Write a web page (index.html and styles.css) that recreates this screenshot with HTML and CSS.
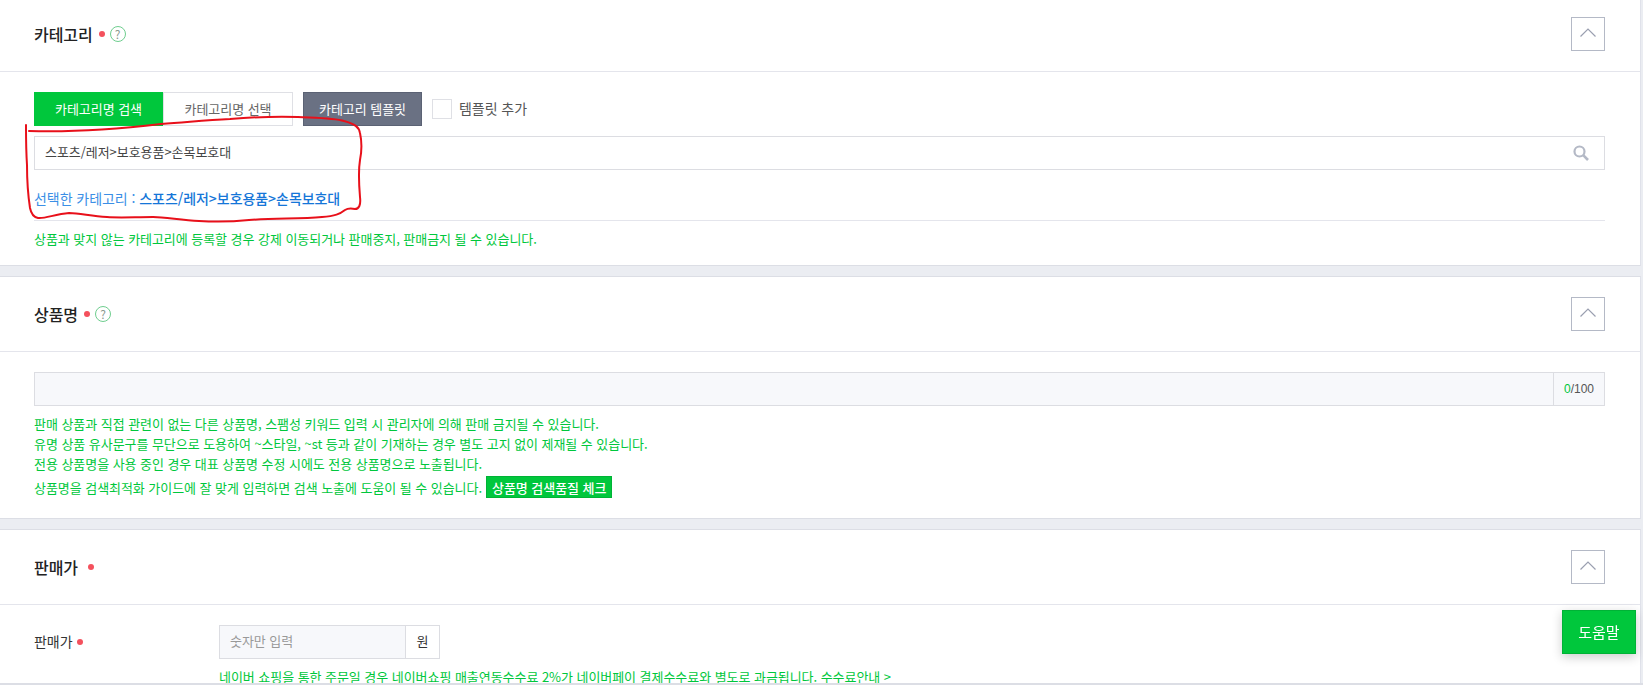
FILE: index.html
```html
<!DOCTYPE html>
<html lang="ko">
  <head>
    <meta charset="UTF-8" />
    <title>상품 등록</title>
    <link rel="stylesheet" href="styles.css">
  </head>
  <body>
    <div class="page">
      <section class="panel panel-category">
        <div class="panel-head">
          <h3>카테고리</h3>
          <span class="dot"></span>
          <span class="help-icon">?</span>
          <button class="toggle">
            <svg width="16" height="9" viewBox="0 0 16 9"><path d="M0.5 8.5L8 1l7.5 7.5" fill="none" stroke="#9a9fb0" stroke-width="1.2"/></svg>
          </button>
        </div>
        <div class="panel-body">
          <div class="tab-row">
            <button class="tab tab-on">카테고리명 검색</button>
            <button class="tab tab-off">카테고리명 선택</button>
            <button class="btn-template">카테고리 템플릿</button>
            <span class="check-box"></span>
            <span class="check-label">템플릿 추가</span>
          </div>
          <div class="search-box">
            <span class="search-text">스포츠/레저&gt;보호용품&gt;손목보호대</span>
            <svg width="16" height="16" viewBox="0 0 16 16"><circle cx="6.5" cy="6.5" r="5" fill="none" stroke="#b4b9c6" stroke-width="2.2"/><path d="M10.2 10.2L15 15" stroke="#b4b9c6" stroke-width="2.6"/></svg>
          </div>
          <p class="selected">선택한 카테고리 : <b>스포츠/레저&gt;보호용품&gt;손목보호대</b></p>
          <p class="note note-top">상품과 맞지 않는 카테고리에 등록할 경우 강제 이동되거나 판매중지, 판매금지 될 수 있습니다.</p>
        </div>
      </section>

      <section class="panel panel-name">
        <div class="panel-head">
          <h3>상품명</h3>
          <span class="dot"></span>
          <span class="help-icon">?</span>
          <button class="toggle">
            <svg width="16" height="9" viewBox="0 0 16 9"><path d="M0.5 8.5L8 1l7.5 7.5" fill="none" stroke="#9a9fb0" stroke-width="1.2"/></svg>
          </button>
        </div>
        <div class="panel-body">
          <div class="name-input">
            <span class="name-field"></span>
            <span class="counter"><em>0</em>/100</span>
          </div>
          <ul class="notes">
            <li>판매 상품과 직접 관련이 없는 다른 상품명, 스팸성 키워드 입력 시 관리자에 의해 판매 금지될 수 있습니다.</li>
            <li>유명 상품 유사문구를 무단으로 도용하여 ~스타일, ~st 등과 같이 기재하는 경우 별도 고지 없이 제재될 수 있습니다.</li>
            <li>전용 상품명을 사용 중인 경우 대표 상품명 수정 시에도 전용 상품명으로 노출됩니다.</li>
            <li class="notes-last">상품명을 검색최적화 가이드에 잘 맞게 입력하면 검색 노출에 도움이 될 수 있습니다. <button class="btn-check">상품명 검색품질 체크</button></li>
          </ul>
        </div>
      </section>

      <section class="panel panel-price">
        <div class="panel-head">
          <h3>판매가</h3>
          <span class="dot dot-far"></span>
          <button class="toggle">
            <svg width="16" height="9" viewBox="0 0 16 9"><path d="M0.5 8.5L8 1l7.5 7.5" fill="none" stroke="#9a9fb0" stroke-width="1.2"/></svg>
          </button>
        </div>
        <div class="panel-body price-body">
          <div class="price-label">판매가<span class="dot"></span></div>
          <div class="price-main">
            <div class="price-input">
              <span class="price-field">숫자만 입력</span>
              <span class="price-unit">원</span>
            </div>
            <p class="note">네이버 쇼핑을 통한 주문일 경우 네이버쇼핑 매출연동수수료 2%가 네이버페이 결제수수료와 별도로 과금됩니다. 수수료안내 &gt;</p>
          </div>
        </div>
      </section>
    </div>

    <!-- 빨간 펜으로 표시한 부분 -->
    <svg class="scribble" width="1643" height="685" viewBox="0 0 1643 685">
      <path d="M29 131C60 132 110 130 161 124C190 122 205 120 230 119C255 117 275 116 298 117C320 118 335 118 344 121C355 124 359 127 360 133C362 142 362 150 360 160C358 172 359 185 360 197C361 205 359 209 355 209C350 208 348 208 345 210C340 214 335 216 322 217C300 219 275 218 249 220C230 222 215 222 199 221C180 220 165 217 153 217C135 217 120 218 107 217C90 216 80 213 69 213C55 214 45 219 38 218C33 217 31 213 30 208C28 195 27 180 27 165C26 150 26 138 26 125" fill="none" stroke="#e8101a" stroke-width="2" stroke-linecap="round" stroke-linejoin="round"/>
    </svg>

    <button class="help-float">도움말</button>
    <div class="bottom-edge"></div>
  </body>
</html>
```
FILE: styles.css
```css
* {
  box-sizing: border-box;
}

body,
html {
  margin: 0;
  padding: 0;
  height: 100%;
  overflow: hidden;
  background: #fff;
  font-family: "Noto Sans CJK KR", "Liberation Sans", sans-serif;
  font-size: 13px;
  letter-spacing: -0.05px;
  color: #333;
}

button {
  font-family: inherit;
  letter-spacing: inherit;
  cursor: pointer;
}

p,
ul,
h3 {
  margin: 0;
  padding: 0;
}

.page {
  background: #ebedf2;
  padding-right: 2px;
}

.panel {
  background: #fff;
  border-right: 1px solid #e0e2ea;
  border-bottom: 1px solid #dcdee5;
  margin-bottom: 10px;
}

.panel-name,
.panel-price {
  border-top: 1px solid #dcdee5;
}

/* 패널 헤더 */
.panel-head {
  display: flex;
  align-items: center;
  height: 72px;
  padding: 0 35px 4px 34px;
  border-bottom: 1px solid #e4e5ec;
}

.panel-head h3 {
  font-size: 16px;
  font-weight: 500;
  color: #222;
}

.panel-name .panel-head,
.panel-price .panel-head {
  height: 75px;
  padding-bottom: 1px;
}

.dot {
  width: 6px;
  height: 6px;
  margin-left: 6px;
  border-radius: 50%;
  background: #f4515d;
}

.dot-far {
  margin-left: 10px;
}

.help-icon {
  width: 16px;
  height: 16px;
  margin-left: 5px;
  border: 1px solid #6fce8f;
  border-radius: 50%;
  font-size: 12px;
  line-height: 14px;
  text-align: center;
  color: #8a9a90;
}

.toggle {
  display: flex;
  align-items: center;
  justify-content: center;
  width: 34px;
  height: 34px;
  margin-left: auto;
  padding: 0 0 2px;
  background: #fff;
  border: 1px solid #b4b9c6;
}

.panel-body {
  padding: 20px 35px 0 34px;
}

/* 카테고리 */
.panel-category .panel-body {
  padding-bottom: 17px;
}

.tab-row {
  display: flex;
  align-items: center;
}

.tab {
  width: 130px;
  height: 34px;
  padding: 0 0 2px;
  font-size: 13px;
}

.tab-on {
  width: 129px;
  background: #00c73c;
  border: 1px solid #00c73c;
  color: #fff;
}

.tab-off {
  background: #fff;
  border: 1px solid #dfe0e5;
  color: #666;
}

.btn-template {
  width: 119px;
  height: 34px;
  margin-left: 10px;
  padding: 0 0 2px;
  background: #6a7183;
  border: 1px solid #5b6274;
  color: #fff;
  font-size: 13px;
}

.check-box {
  width: 20px;
  height: 20px;
  margin-left: 10px;
  border: 1px solid #dfe0e5;
}

.check-label {
  margin-left: 7px;
  padding-bottom: 2px;
  font-size: 14px;
  color: #555;
}

.search-box {
  display: flex;
  align-items: center;
  justify-content: space-between;
  height: 34px;
  margin-top: 10px;
  padding: 0 15px 0 10px;
  border: 1px solid #dcdde2;
}

.search-text {
  padding-bottom: 3px;
  color: #444;
}

.selected {
  margin-top: 18px;
  padding-bottom: 12px;
  line-height: 20px;
  border-bottom: 1px solid #e4e5ec;
  font-size: 14px;
  color: #3b8fe6;
}

.selected b {
  font-weight: 500;
  color: #1576d8;
}

.note {
  line-height: 18px;
  color: #00c73c;
  white-space: nowrap;
}

.note-top {
  margin-top: 9px;
}

/* 상품명 */
.panel-name .panel-body {
  padding-bottom: 18px;
}

.name-input {
  display: flex;
  height: 34px;
  background: #f7f8fb;
  border: 1px solid #dcdde2;
}

.name-field {
  flex: 1;
}

.counter {
  width: 51px;
  border-left: 1px solid #dcdde2;
  font-family: "Liberation Sans", sans-serif;
  font-size: 12px;
  letter-spacing: 0;
  line-height: 32px;
  text-align: center;
  color: #555;
}

.counter em {
  font-style: normal;
  color: #00c73c;
}

.notes {
  margin-top: 8px;
  list-style: none;
  color: #00c73c;
}

.notes li {
  line-height: 20px;
}

.notes .notes-last {
  display: flex;
  align-items: flex-start;
  height: 24px;
  margin-top: 2px;
  line-height: 24px;
}

.btn-check {
  height: 22px;
  margin-left: 4px;
  padding: 0 5px;
  background: #00c73c;
  border: 1px solid #00b336;
  color: #fff;
  font-size: 13px;
  font-weight: 500;
}

/* 판매가 */
.price-body {
  display: flex;
}

.price-label {
  display: flex;
  align-items: center;
  width: 185px;
  height: 34px;
  padding-bottom: 3px;
  font-size: 14px;
}

.price-label .dot {
  margin-top: 3px;
  margin-left: 4px;
}

.price-input {
  display: flex;
  width: 221px;
  height: 34px;
  border: 1px solid #dcdde2;
}

.price-field {
  flex: 1;
  padding-left: 10px;
  background: #f7f8fb;
  line-height: 30px;
  color: #999;
}

.price-unit {
  width: 34px;
  border-left: 1px solid #dcdde2;
  line-height: 30px;
  text-align: center;
}

.price-main .note {
  margin-top: 9px;
}

/* 위에 덮이는 요소 */
.scribble {
  position: absolute;
  top: 0;
  left: 0;
  pointer-events: none;
}

.help-float {
  position: fixed;
  right: 7px;
  bottom: 31px;
  width: 74px;
  height: 44px;
  padding: 0 0 2px;
  background: #00c73c;
  border: 1px solid #00b336;
  box-shadow: 0 3px 10px rgba(0, 0, 0, 0.2);
  color: #fff;
  font-size: 15px;
}

.bottom-edge {
  position: fixed;
  left: 0;
  right: 0;
  bottom: 0;
  height: 2px;
  background: #dcdee5;
}
```
